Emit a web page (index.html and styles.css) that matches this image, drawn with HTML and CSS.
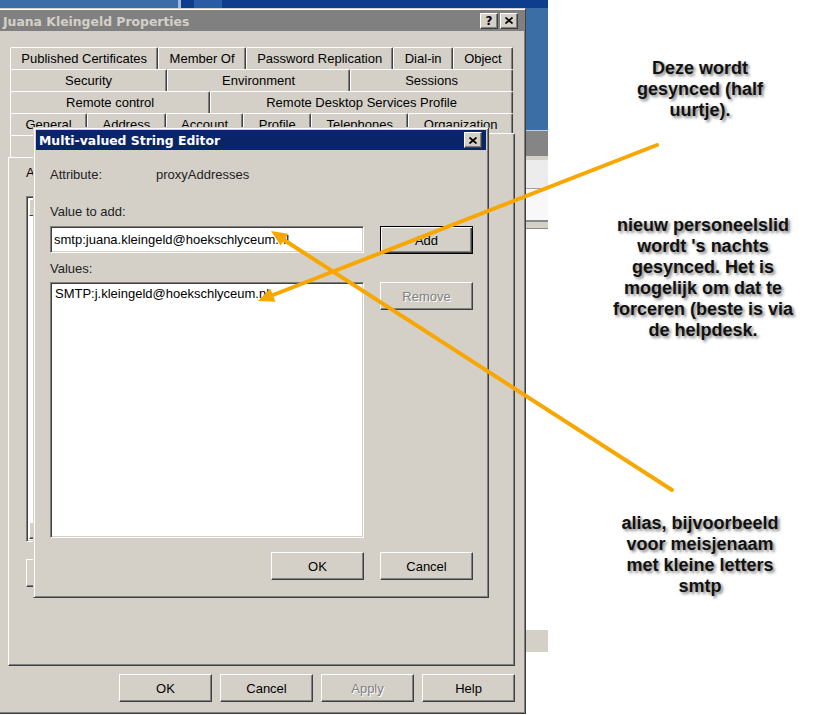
FILE: index.html
```html
<!DOCTYPE html>
<html>
<head>
<meta charset="utf-8">
<title>Juana Kleingeld Properties</title>
<link rel="stylesheet" href="styles.css">
</head>
<body>
<div class="desktop">
	<div class="desk_top"></div>
	<div class="desk_rest"><div class="desk_side"></div></div>
</div>

<div class="window props">
	<div class="titlebar">
		<span class="title">Juana Kleingeld Properties</span>
		<span class="capbtn help_glyph">?</span>
		<span class="capbtn"><svg width="8" height="7" viewBox="0 0 8 7"><path d="M0.5 0.5 L7.5 6.5 M7.5 0.5 L0.5 6.5" stroke="#000" stroke-width="1.7"/></svg></span>
	</div>
	<div class="props_body">
		<div class="tabs">
			<div class="tab_row">
				<div class="tab">Published Certificates</div>
				<div class="tab">Member Of</div>
				<div class="tab">Password Replication</div>
				<div class="tab">Dial-in</div>
				<div class="tab">Object</div>
			</div>
			<div class="tab_row">
				<div class="tab">Security</div>
				<div class="tab">Environment</div>
				<div class="tab">Sessions</div>
			</div>
			<div class="tab_row">
				<div class="tab">Remote control</div>
				<div class="tab">Remote Desktop Services Profile</div>
			</div>
			<div class="tab_row">
				<div class="tab">General</div>
				<div class="tab">Address</div>
				<div class="tab">Account</div>
				<div class="tab">Profile</div>
				<div class="tab">Telephones</div>
				<div class="tab">Organization</div>
			</div>
			<!-- last row sits under the editor, labels never show -->
			<div class="tab_row">
				<div class="tab tab_blank"></div>
				<div class="tab tab_blank selected"></div>
			</div>
		</div>
		<div class="tab_panel">
			<div class="panel_label">Attributes:</div>
			<div class="field attr_list">
				<div class="list_head"><span class="col col_name"></span><span class="col"></span></div>
				<div class="list_rows"></div>
				<div class="hscroll"><span class="sbtn"></span></div>
			</div>
			<div class="panel_buttons">
				<button class="btn"></button>
			</div>
		</div>
		<div class="dialog_buttons">
			<button class="btn">OK</button>
			<button class="btn">Cancel</button>
			<button class="btn" disabled>Apply</button>
			<button class="btn">Help</button>
		</div>
	</div>
</div>

<div class="window editor">
	<div class="titlebar">
		<span class="title">Multi-valued String Editor</span>
		<span class="capbtn"><svg width="8" height="7" viewBox="0 0 8 7"><path d="M0.5 0.5 L7.5 6.5 M7.5 0.5 L0.5 6.5" stroke="#000" stroke-width="1.7"/></svg></span>
	</div>
	<div class="editor_body">
		<div class="attr_row"><span class="attr_key">Attribute:</span><span>proxyAddresses</span></div>
		<div class="label value_label">Value to add:</div>
		<div class="edit_row">
			<input type="text" class="field value_box" value="smtp:juana.kleingeld@hoekschlyceum.nl">
			<button class="btn btn_default">Add</button>
		</div>
		<div class="label values_label">Values:</div>
		<div class="edit_row">
			<ul class="field values_list">
				<li>SMTP:j.kleingeld@hoekschlyceum.nl</li>
			</ul>
			<button class="btn" disabled>Remove</button>
		</div>
		<div class="editor_footer">
			<button class="btn">OK</button>
			<button class="btn">Cancel</button>
		</div>
	</div>
</div>

<div class="note note_sync">Deze wordt<br>gesynced (half<br>uurtje).</div>
<div class="note note_night">nieuw personeelslid<br>wordt 's nachts<br>gesynced. Het is<br>mogelijk om dat te<br>forceren (beste is via<br>de helpdesk.</div>
<div class="note note_alias">alias, bijvoorbeeld<br>voor meisjenaam<br>met kleine letters<br>smtp</div>

<svg class="arrows" width="826" height="715" viewBox="0 0 826 715">
	<g stroke="#f8a700" stroke-width="4" stroke-linecap="round">
		<line x1="657" y1="145" x2="273" y2="295"/>
		<line x1="672" y1="490" x2="284" y2="240"/>
	</g>
	<g fill="#f8a700">
		<polygon points="258,301 270.3,288.6 275.5,301.7"/>
		<polygon points="271,231 288.2,233.8 280.6,245.6"/>
	</g>
</svg>
</body>
</html>
```

FILE: styles.css
```css
html, body{
	margin:0;
	padding:0;
}
body{
	width:826px;
	height:715px;
	overflow:hidden;
	position:relative;
	background:#fff;
	font-family:"Liberation Sans", Arial, sans-serif;
	font-size:13px;
	color:#000;
}

/* whatever is behind the dialogs */
.desktop{
	width:548px;
	height:715px;
	display:flex;
	flex-direction:column;
}
.desk_top{
	height:8px;
	background:linear-gradient(to right, #3b6ea6 0, #3b6ea6 178px, #9db8dc 178px, #9db8dc 181px, #0d3d8c 181px, #0d3d8c 194px, #2a5ca6 194px, #2a5ca6 222px, #0d3d8c 222px);
}
.desk_rest{
	flex:1;
	display:flex;
	justify-content:flex-end;
}
.desk_side{
	width:22px;
	background:linear-gradient(to bottom,
		#3a6ea5 0, #3a6ea5 122px,
		#c3cede 122px, #c3cede 123px,
		#858585 123px, #858585 148px,
		#d4d0c8 148px, #d4d0c8 152px,
		#ececec 152px, #ececec 180px,
		#a0a0a0 180px, #a0a0a0 181px,
		#f8f8f8 181px, #f8f8f8 212px,
		#8a8a8a 212px, #8a8a8a 214px,
		#d4d0c8 214px, #d4d0c8 220px,
		#8a8a8a 220px, #8a8a8a 221px,
		#fff 221px, #fff 622px,
		#d4d0c8 622px, #d4d0c8 644px,
		#fff 644px);
}

/* classic windows */
.window{
	position:absolute;
	box-sizing:border-box;
	background:#d4d0c8;
	border:1px solid;
	border-color:#d4d0c8 #404040 #404040 #d4d0c8;
	box-shadow:inset 1px 1px #fff, inset -1px -1px #808080;
	padding:1px;
	display:flex;
	flex-direction:column;
}
.titlebar{
	display:flex;
	align-items:center;
	height:21px;
	background:#808080;
	color:#d4d0c8;
	font-family:"DejaVu Sans", sans-serif;
	font-weight:bold;
	font-size:12.4px;
	padding:0 6px 0 4px;
	white-space:nowrap;
}
.titlebar .title{
	flex:1;
	padding-top:2px;
}
.capbtn{
	box-sizing:border-box;
	width:18px;
	height:16px;
	margin-left:2px;
	background:#d4d0c8;
	border:1px solid;
	border-color:#fff #404040 #404040 #fff;
	box-shadow:inset -1px -1px #808080;
	display:flex;
	align-items:center;
	justify-content:center;
	color:#000;
}
.help_glyph{
	font-size:12px;
	line-height:14px;
}

.btn{
	box-sizing:border-box;
	width:93px;
	height:28px;
	margin:0;
	padding:0;
	background:#d4d0c8;
	border:1px solid;
	border-color:#fff #404040 #404040 #fff;
	box-shadow:inset -1px -1px #808080;
	font-family:inherit;
	font-size:13px;
	color:#000;
}
.btn:disabled{
	color:#808080;
	text-shadow:1px 1px #fff;
}
.btn_default{
	border-color:#000;
	box-shadow:inset 1px 1px #fff, inset -1px -1px #404040, inset -2px -2px #808080;
}
.field{
	box-sizing:border-box;
	background:#fff;
	border:1px solid;
	border-color:#808080 #fff #fff #808080;
	box-shadow:inset 1px 1px #404040, inset -1px -1px #d4d0c8;
}

/* properties dialog */
.props{
	left:-3px;
	top:8px;
	width:529px;
	height:706px;
	z-index:0;
}
.props_body{
	flex:1;
	display:flex;
	flex-direction:column;
	padding:16px 9px 10px;
}
.tabs{
	margin:0 2px;
	display:flex;
	flex-direction:column;
}
.tab_row{
	display:flex;
	height:22px;
}
.tab{
	flex:1 1 auto;
	box-sizing:border-box;
	border:1px solid;
	border-color:#fff #404040 transparent #fff;
	border-bottom:0;
	border-radius:2px 2px 0 0;
	box-shadow:inset -1px 0 #808080;
	text-align:center;
	line-height:21px;
	white-space:nowrap;
	background:#d4d0c8;
}
.tab_blank{
	flex:1 1 0;
}
.tab.selected{
	margin:-2px -2px -1px;
	position:relative;
	z-index:1;
}
.tab_panel{
	flex:1;
	display:flex;
	flex-direction:column;
	border:1px solid;
	border-color:#fff #404040 #404040 #fff;
	box-shadow:inset -1px -1px #808080;
	padding:7px 17px 0;
}
.panel_label{
	line-height:15px;
}
.attr_list{
	margin-top:16px;
	height:346px;
	width:440px;
	display:flex;
	flex-direction:column;
	padding:2px;
}
.list_head{
	display:flex;
	height:17px;
}
.list_head .col{
	box-sizing:border-box;
	background:#d4d0c8;
	border:1px solid;
	border-color:#fff #404040 #404040 #fff;
	flex:1;
}
.list_head .col_name{
	flex:0 0 150px;
}
.list_rows{
	flex:1;
}
.hscroll{
	height:17px;
	background:#e8e6e0;
	display:flex;
}
.sbtn{
	box-sizing:border-box;
	width:17px;
	background:#d4d0c8;
	border:1px solid;
	border-color:#fff #404040 #404040 #fff;
	box-shadow:inset -1px -1px #808080;
}
.panel_buttons{
	margin-top:17px;
	display:flex;
}
.panel_buttons .btn{
	width:75px;
}
.dialog_buttons{
	margin-top:8px;
	display:flex;
	justify-content:flex-end;
	gap:8px;
}

/* string editor */
.editor{
	left:33px;
	top:127px;
	width:456px;
	padding:2px;
	z-index:1;
}
.editor .titlebar{
	height:20px;
	background:#0a246a;
	color:#fff;
	padding:0 4px 0 3px;
}
.editor .titlebar .title{
	padding-top:1px;
}
.editor_body{
	display:flex;
	flex-direction:column;
	padding:17px 13px 15px 14px;
	color:#222;
}
.attr_row{
	display:flex;
	line-height:15px;
}
.attr_key{
	width:106px;
}
.label{
	line-height:15px;
}
.value_label{
	margin-top:22px;
}
.values_label{
	margin-top:7px;
}
.edit_row{
	display:flex;
	align-items:flex-start;
	gap:16px;
	margin-top:7px;
}
.values_label + .edit_row{
	margin-top:6px;
}
.value_box{
	width:314px;
	height:27px;
	margin:0;
	padding:0 3px;
	font-family:inherit;
	font-size:13px;
	color:#000;
	outline:none;
}
.values_list{
	width:314px;
	height:256px;
	margin:0;
	padding:3px 4px;
	list-style:none;
	line-height:15px;
	color:#000;
}
.editor_footer{
	margin-top:14px;
	display:flex;
	justify-content:flex-end;
	gap:16px;
}

/* notes written on the screenshot */
.note{
	position:absolute;
	z-index:2;
	width:220px;
	text-align:center;
	font-family:"Liberation Sans", Arial, sans-serif;
	font-weight:bold;
	font-size:18px;
	line-height:21px;
	color:#111;
	text-shadow:2px 2px 3px rgba(0,0,0,.5);
}
.note_sync{
	left:590px;
	top:58px;
}
.note_night{
	left:593px;
	top:215px;
}
.note_alias{
	left:590px;
	top:513px;
}
.arrows{
	position:absolute;
	z-index:3;
	left:0;
	top:0;
	pointer-events:none;
}
```
